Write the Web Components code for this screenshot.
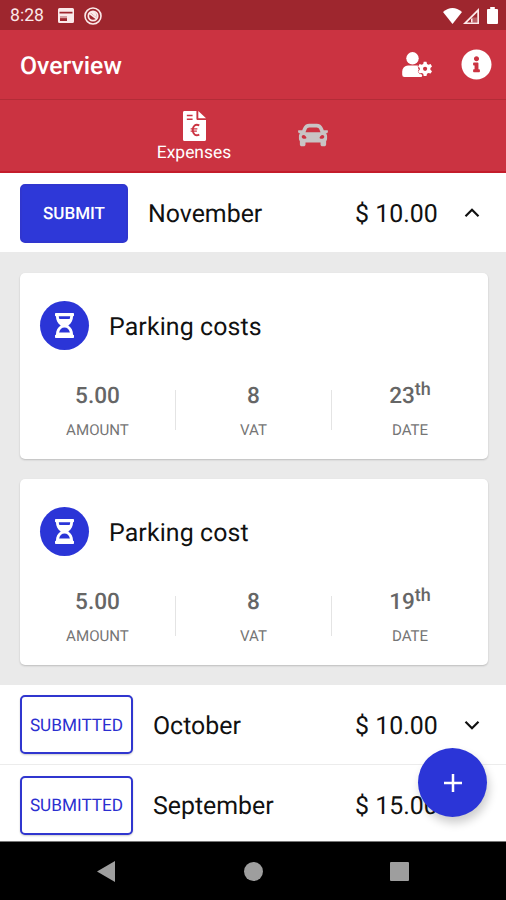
<!DOCTYPE html>
<html lang="en">
<head>
<meta charset="utf-8">
<title>Overview</title>
<style>
html,body{margin:0;padding:0}
body{font-family:Roboto,"Noto Sans",sans-serif;text-rendering:geometricPrecision;background:#fff;width:506px;height:900px;overflow:hidden}
</style>
</head>
<body>
<expense-app></expense-app>
<script>
const define = (name, html) => {
  const template = document.createElement('template');
  template.innerHTML = html;
  customElements.define(name, class extends HTMLElement {
    constructor() {
      super();
      this.attachShadow({mode: 'open'}).append(template.content.cloneNode(true));
    }
  });
};

const ICONS = {
  info: ['0 0 512 512', '<path d="M256 8C119.043 8 8 119.083 8 256c0 136.997 111.043 248 248 248s248-111.003 248-248C504 119.083 392.957 8 256 8zm0 110c23.196 0 42 18.804 42 42s-18.804 42-42 42-42-18.804-42-42 18.804-42 42-42zm56 254c0 6.627-5.373 12-12 12h-88c-6.627 0-12-5.373-12-12v-24c0-6.627 5.373-12 12-12h12v-64h-12c-6.627 0-12-5.373-12-12v-24c0-6.627 5.373-12 12-12h64c6.627 0 12 5.373 12 12v100h12c6.627 0 12 5.373 12 12v24z"/>'],
  car: ['0 0 512 512', '<path d="M500 176h-59.9l-16.6-41.6C406.4 91.6 365.6 64 319.500 64h-127c-46.100 0-86.900 27.600-104 70.400L71.900 176H12C4.200 176-1.500 183.300.400 190.900l6 24C7.700 220.300 12.500 224 18 224h20.100C24.700 235.700 16 252.800 16 272v48c0 16.100 6.200 30.700 16 41.900V416c0 17.700 14.300 32 32 32h32c17.700 0 32-14.300 32-32v-32h256v32c0 17.700 14.300 32 32 32h32c17.700 0 32-14.300 32-32v-54.100c9.800-11.200 16-25.800 16-41.900v-48c0-19.200-8.700-36.300-22.100-48H494c5.500 0 10.300-3.700 11.600-9.100l6-24c1.900-7.600-3.800-14.900-11.600-14.900zM147.900 158.200c7.300-18.200 25-30.200 44.600-30.200h127c19.600 0 37.300 12 44.600 30.200L384 208H128zM96 319.800c-19.200 0-32-12.800-32-31.900S76.800 256 96 256s48 28.700 48 47.800-28.800 16-48 16zm320 0c-19.200 0-48 3.200-48-16S396.800 256 416 256s32 12.800 32 31.900-12.800 31.900-32 31.900z"/>'],
  // Person with a gear at the lower right
  userCog: ['0 0 30 25', '<circle cx="10.500" cy="6.300" r="6.200"/><path d="M6 13.500h8.500c1.200 0 2 .3 2.300.8l-.8 1.700.8 1.500-.8 1.600 1.700 3 1.800.2.8 1.500-.8 1.200H2.400A2.200 2.200 0 0 1 .2 22.800v-3.300A6 6 0 0 1 6 13.500z"/><path fill-rule="evenodd" stroke="#cb3341" stroke-width=".8" paint-order="stroke" d="M21.700 9.700h2.800l.5 2.200 1.500.8 2.100-.7 1.400 2.400-1.600 1.600v1.700l1.600 1.500-1.400 2.400-2.100-.7-1.500.9-.5 2.200h-2.800l-.5-2.200-1.500-.9-2.100.7-1.400-2.400 1.600-1.500V16l-1.600-1.600 1.400-2.400 2.100.7 1.500-.8zM23.100 14.700a2.100 2.100 0 1 0 0 4.200 2.100 2.100 0 0 0 0-4.200z"/>'],
  bill: ['0 0 24 30', '<path d="M1.500 0H14v7.500c0 1 .6 1.500 1.500 1.500H24v19.500c0 .9-.6 1.500-1.500 1.500h-21C.6 30 0 29.400 0 28.500v-27C0 .6.600 0 1.500 0z"/><path d="M16 0l8 7.300H16z"/><g fill="none" stroke="#cb3341"><path stroke-width="1.600" d="M4 4.500h6M4 8.300h6"/><path stroke-width="1.900" d="M17 14.300c-4-1.800-6.800.6-6.800 4.700s2.800 6.500 6.800 4.700"/><path stroke-width="1.300" d="M8 17.900h7M8 20.200h6.500"/></g>'],
  hourglass: ['0 0 20 26', '<path fill-rule="evenodd" d="M.8 0h18.400q.8 0 .8.800v1.900q0 .8-.8.800H19c0 4-1.800 7.600-5 9.500 3.200 1.900 5 5.500 5 9.500h.2q.8 0 .8.800v1.900q0 .8-.8.800H.8Q0 26 0 25.200v-1.900q0-.8.800-.8H1c0-4 1.800-7.600 5-9.500-3.200-1.900-5-5.500-5-9.500H.8Q0 3.500 0 2.700V.8Q0 0 .8 0zM4 3.500q.1 1.500.6 2.800h10.800q.5-1.300.6-2.800zM4.300 20.300h11.400c-.9-3.300-2.900-5.100-5.700-5.100s-4.800 1.800-5.700 5.100z"/>'],
  up: ['0 0 16 10', '<path fill="none" stroke="currentColor" stroke-width="2.200" d="M1.500 8.200L8 1.800l6.500 6.400"/>'],
  down: ['0 0 16 10', '<path fill="none" stroke="currentColor" stroke-width="2.200" d="M1.500 1.800L8 8.200l6.500-6.400"/>'],
  plus: ['0 0 18 18', '<path fill="none" stroke="currentColor" stroke-width="2.500" d="M9 0v18M0 9h18"/>'],
  card: ['0 0 16 15', '<path fill-rule="evenodd" d="M1.500 0h13Q16 0 16 1.500v12q0 1.500-1.500 1.500h-13Q0 15 0 13.500v-12Q0 0 1.500 0zM1.500 3.800v1.700h13V3.800zM2 8v5h7V8z"/><path opacity=".6" d="M2 8h7v2.200H2z"/>'],
  noSign: ['0 0 18 18', '<g fill="none" stroke="currentColor"><circle cx="9" cy="9" r="8" stroke-width="1.600"/><circle cx="9" cy="9" r="4.700" stroke-width="1.700"/><path stroke-width="1.700" d="M5 6l8 6"/></g><path d="M6 5.500q4-2.500 6.500 1.500l.5 4z"/>'],
  wifi: ['0 0 20 16', '<path d="M0 4Q10-4 20 4L10 16z"/>'],
  signal: ['0 0 16 16', '<path fill-rule="evenodd" d="M16 0v16H0zM14.300 4.200L4 14.500h10.300z"/><path d="M9 9.500h5v5H9z" opacity=".3"/><path d="M8 10.500h1.500v4H8z"/>'],
  battery: ['0 0 12 17', '<path d="M3.500 0h5v2H11q1 0 1 1v13q0 1-1 1H1q-1 0-1-1V3q0-1 1-1h2.500z"/>'],
  back: ['0 0 18 20', '<path d="M18 0v20L0 10z"/>'],
  home: ['0 0 18 18', '<circle cx="9" cy="9" r="9"/>'],
  recent: ['0 0 19 19', '<rect width="19" height="19" rx="1"/>']
};

customElements.define('app-icon', class extends HTMLElement {
  connectedCallback() {
    const [box, body] = ICONS[this.getAttribute('name')];
    this.attachShadow({mode: 'open'}).innerHTML =
      `<style>:host{display:block;flex:none}svg{display:block;width:100%;height:100%}</style>
       <svg viewBox="${box}" fill="currentColor" preserveAspectRatio="none">${body}</svg>`;
  }
});

define('status-bar', `<style>
:host{display:flex;align-items:center;height:30px;box-sizing:border-box;padding:1px 8px 0 10px;background:#9e262e;color:#fbe9e9;font-size:17.600px;line-height:30px}
.card{width:16px;height:15px;margin-left:14px}.no{width:18px;height:18px;margin-left:10px}
.wifi{width:19px;height:16px;margin-left:auto;color:#fff}.sig{width:16px;height:16px;margin-left:1px}.bat{width:11px;height:17px;margin-left:8px;color:#fff}
</style><span>8:28</span><app-icon class="card" name="card"></app-icon><app-icon class="no" name="noSign"></app-icon>
<app-icon class="wifi" name="wifi"></app-icon><app-icon class="sig" name="signal"></app-icon><app-icon class="bat" name="battery"></app-icon>`);

define('app-header', `<style>
:host{display:flex;align-items:center;height:70px;box-sizing:border-box;padding:0 14px 0 20px;background:#cb3341;color:#fff;border-bottom:1px solid #b32c37}
h1{margin:4px auto 0 0;font-size:24.800px;font-weight:500;line-height:30px}
.user{width:30px;height:25px;margin-right:29px}.info{width:31px;height:31px;margin-top:-1px}
</style><h1><slot></slot></h1><app-icon class="user" name="userCog"></app-icon><app-icon class="info" name="info"></app-icon>`);

define('tab-bar', `<style>
:host{display:flex;justify-content:center;height:73px;box-sizing:border-box;background:#cb3341;color:#fff;border-bottom:2px solid #c41d2b}
.tab{width:119px;display:flex;flex-direction:column;align-items:center}
.bill{width:23px;height:30px;margin-top:11px;margin-left:1px}span{font-size:17.400px;line-height:20px;margin-top:2px;margin-left:1px}
.car{width:30px;height:30px;margin-top:20px;color:#c9c4c4}
</style><div class="tab"><app-icon class="bill" name="bill"></app-icon><span>Expenses</span></div>
<div class="tab"><app-icon class="car" name="car"></app-icon></div>`);

define('month-row', `<style>
:host{display:flex;align-items:center;box-sizing:border-box;height:80px;padding:0 26px 0 20px;font-size:24.900px;color:#111;background:#fff}
.btn{box-sizing:border-box;width:113px;height:59px;border:2px solid #3036cf;border-radius:5px;display:flex;align-items:center;justify-content:center;font-size:17.200px;color:#2b2fd0;background:#fff;box-shadow:0 1px 2px #0003;margin-right:20px;line-height:20px;padding-top:2px}
:host([open]) .btn{width:108px;background:#2e38d8;color:#fff;font-weight:500;font-size:17px;box-shadow:none}
.name,.total{padding-top:3px}.total{margin-left:auto;width:97px}
</style><div class="btn"><slot name="action"></slot></div><div class="name"><slot></slot></div><div class="total"><slot name="total"></slot></div><slot name="icon"></slot>`);

define('expense-card', `<style>
:host{display:block;box-sizing:border-box;height:186px;background:#fff;border-radius:5px;box-shadow:0 1px 2px #0003;padding:28px 0 0}
.head{display:flex;align-items:center;padding-left:20px;gap:20px;font-size:24.900px;letter-spacing:.12px;color:#111}
.badge{width:49px;height:49px;border-radius:50%;background:#2b35d7;color:#fff;display:grid;place-items:center}
.badge app-icon{width:19px;height:25px}.title{padding-top:4px}
.stats{display:grid;grid-template-columns:155px 156px 157px;grid-template-rows:40px;height:40px;margin-top:40px}
.stats>div{text-align:center}.stats>div+div{border-left:1.500px solid #e4e4e4}
b{display:block;font-weight:500;font-size:22.600px;line-height:26px;color:#666;margin-top:-7px}
span{display:block;font-size:15.100px;line-height:18px;margin-top:12px;color:#757575}
</style><div class="head"><div class="badge"><app-icon name="hourglass"></app-icon></div><div class="title"><slot></slot></div></div>
<div class="stats"><div><b><slot name="amount"></slot></b><span>AMOUNT</span></div><div><b><slot name="vat"></slot></b><span>VAT</span></div><div><b><slot name="date"></slot></b><span>DATE</span></div></div>`);

define('add-button', `<style>
:host{position:absolute;left:418px;top:748px;width:69px;height:69px;border-radius:50%;background:#2b35d7;color:#fff;display:grid;place-items:center;box-shadow:2px 6px 10px #0003}
app-icon{width:18px;height:18px}</style><app-icon name="plus"></app-icon>`);

define('system-nav', `<style>
:host{display:flex;align-items:center;height:59px;box-sizing:border-box;background:#000;color:#9e9e9e;border-top:1px solid #777;padding-left:97px}
.b{width:18px;height:21px}.h{width:19px;height:19px;margin-left:129px}.r{width:19px;height:19px;margin-left:127px}
</style><app-icon class="b" name="back"></app-icon><app-icon class="h" name="home"></app-icon><app-icon class="r" name="recent"></app-icon>`);

define('expense-app', `<style>
:host{display:flex;flex-direction:column;position:relative;width:506px;height:900px}
.list{background:#eaeaea;height:433px;box-sizing:border-box;padding:21px 18px 0 20px;display:flex;flex-direction:column;gap:20px}
sup{font-size:18px;line-height:0;vertical-align:8px}
.arrow{width:16px;height:10px;margin-left:12px}
.first{height:79px;padding-top:1px}.oct{border-bottom:1px solid #ececec}.sep{height:76px;padding-top:4px}
</style>
<status-bar></status-bar>
<app-header>Overview</app-header>
<tab-bar></tab-bar>
<month-row class="first" open><span slot="action">SUBMIT</span>November<span slot="total">$ 10.00</span><app-icon class="arrow" slot="icon" name="up"></app-icon></month-row>
<div class="list">
<expense-card>Parking costs<span slot="amount">5.00</span><span slot="vat">8</span><span slot="date">23<sup>th</sup></span></expense-card>
<expense-card>Parking cost<span slot="amount">5.00</span><span slot="vat">8</span><span slot="date">19<sup>th</sup></span></expense-card>
</div>
<month-row class="oct"><span slot="action">SUBMITTED</span>October<span slot="total">$ 10.00</span><app-icon class="arrow" slot="icon" name="down"></app-icon></month-row>
<month-row class="sep"><span slot="action">SUBMITTED</span>September<span slot="total">$ 15.00</span><app-icon class="arrow" slot="icon" name="down"></app-icon></month-row>
<system-nav></system-nav>
<add-button></add-button>`);
</script>
</body>
</html>
